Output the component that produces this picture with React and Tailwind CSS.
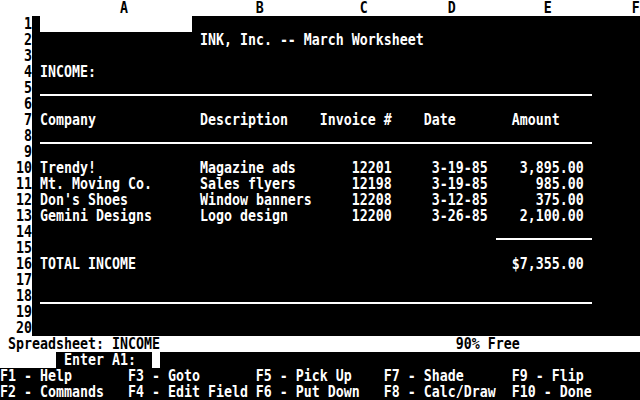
import React from "react";

function place(items, start = 0, width = 80) {
  const arr = Array(width - start).fill(" ");
  for (const [col, text] of items) {
    for (let i = 0; i < text.length; i++) {
      const p = col - start + i;
      if (p >= 0 && p < arr.length) arr[p] = text[i];
    }
  }
  return arr.join("").replace(/\s+$/, "");
}

function T({ children }) {
  return (
    <span className="inline-block whitespace-pre scale-y-[1.24] translate-y-[0.5px]">
      {children}
    </span>
  );
}

function Row({ n, children }) {
  return (
    <div className="flex h-4">
      <div className="w-8 h-4 bg-white text-black text-right">
        <T>{String(n)}</T>
      </div>
      <div className="flex-1 h-4 bg-black text-white">{children}</div>
    </div>
  );
}

function S({ items }) {
  return <T>{place(items, 4)}</T>;
}

function Rule() {
  return <div className="ml-2 w-[552px] h-4 border-b-2 border-white" />;
}

export default function App() {
  const rows = {
    1: <div className="ml-2 w-[152px] h-4 bg-white" />,
    2: <S items={[[25, "INK, Inc. -- March Worksheet"]]} />,
    4: <S items={[[5, "INCOME:"]]} />,
    5: <Rule />,
    7: (
      <S
        items={[
          [5, "Company"],
          [25, "Description"],
          [40, "Invoice #"],
          [53, "Date"],
          [64, "Amount"],
        ]}
      />
    ),
    8: <Rule />,
    10: (
      <S
        items={[
          [5, "Trendy!"],
          [25, "Magazine ads"],
          [44, "12201"],
          [54, "3-19-85"],
          [65, "3,895.00"],
        ]}
      />
    ),
    11: (
      <S
        items={[
          [5, "Mt. Moving Co."],
          [25, "Sales flyers"],
          [44, "12198"],
          [54, "3-19-85"],
          [67, "985.00"],
        ]}
      />
    ),
    12: (
      <S
        items={[
          [5, "Don's Shoes"],
          [25, "Window banners"],
          [44, "12208"],
          [54, "3-12-85"],
          [67, "375.00"],
        ]}
      />
    ),
    13: (
      <S
        items={[
          [5, "Gemini Designs"],
          [25, "Logo design"],
          [44, "12200"],
          [54, "3-26-85"],
          [65, "2,100.00"],
        ]}
      />
    ),
    14: <div className="ml-[464px] w-[96px] h-4 border-b-2 border-white" />,
    16: (
      <S
        items={[
          [5, "TOTAL INCOME"],
          [64, "$7,355.00"],
        ]}
      />
    ),
    18: <Rule />,
  };

  const nums = Array.from({ length: 20 }, (_, i) => i + 1);

  return (
    <div className="w-[640px] h-[400px] overflow-hidden bg-black text-white font-['DejaVu_Sans_Mono',monospace] font-bold text-[13.29px] leading-4">
      <div className="h-4 bg-white text-black">
        <T>
          {place([
            [15, "A"],
            [32, "B"],
            [45, "C"],
            [56, "D"],
            [68, "E"],
            [79, "F"],
          ])}
        </T>
      </div>
      {nums.map((n) => (
        <Row key={n} n={n}>
          {rows[n] || null}
        </Row>
      ))}
      <div className="h-4 bg-white text-black">
        <T>
          {place([
            [1, "Spreadsheet: INCOME"],
            [57, "90% Free"],
          ])}
        </T>
      </div>
      <div className="flex h-4">
        <div className="w-14 h-4 bg-white" />
        <div className="w-24 h-4 bg-black text-white">
          <T>{" Enter A1:"}</T>
        </div>
        <div className="w-2 h-4 bg-white" />
        <div className="flex-1 h-4 bg-black" />
      </div>
      <div className="h-4">
        <T>
          {place([
            [0, "F1 - Help"],
            [16, "F3 - Goto"],
            [32, "F5 - Pick Up"],
            [48, "F7 - Shade"],
            [64, "F9 - Flip"],
          ])}
        </T>
      </div>
      <div className="h-4">
        <T>
          {place([
            [0, "F2 - Commands"],
            [16, "F4 - Edit Field"],
            [32, "F6 - Put Down"],
            [48, "F8 - Calc/Draw"],
            [64, "F10 - Done"],
          ])}
        </T>
      </div>
    </div>
  );
}
